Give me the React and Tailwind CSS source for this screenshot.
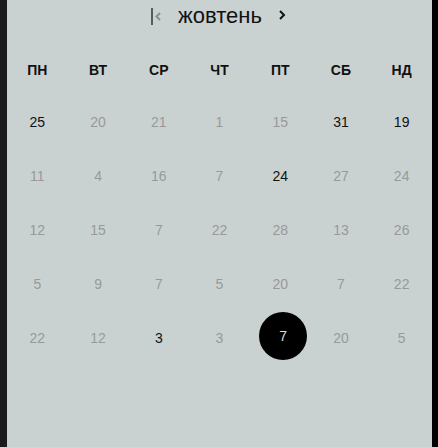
const weekdays = ['ПН', 'ВТ', 'СР', 'ЧТ', 'ПТ', 'СБ', 'НД'];

// [value, active]
const rows = [
  [[25, 1], [20], [21], [1], [15], [31, 1], [19, 1]],
  [[11], [4], [16], [7], [24, 1], [27], [24]],
  [[12], [15], [7], [22], [28], [13], [26]],
  [[5], [9], [7], [5], [20], [7], [22]],
  [[22], [12], [3, 1], [3], [7, 2], [20], [5]],
];

export default function App() {
  return (
    <div className="flex h-[447px] w-[438px] overflow-hidden bg-[#c9d2d1] font-['Liberation_Sans',Arial,sans-serif]">
      <div className="w-[7px] bg-[#1b1b1b]" />

      <div className="flex-1">
        {/* Month header */}
        <div className="flex h-[32px] items-center justify-center pr-[2px]">
          <svg width="11" height="20" viewBox="0 0 11 20" className="mr-[16px]">
            <line x1="1" y1="2" x2="1" y2="19" stroke="#333" strokeWidth="1.5" />
            <path d="M9 7 L5.5 10.5 L9 14" fill="none" stroke="#8a8f8f" strokeWidth="2" />
          </svg>
          <span className="text-[22px] leading-none text-[#111]">жовтень</span>
          <svg width="8" height="12" viewBox="0 0 8 12" className="ml-[16px] -mt-[2px]">
            <path d="M2 2 L6 6 L2 10" fill="none" stroke="#111" strokeWidth="2" />
          </svg>
        </div>

        {/* Weekdays */}
        <div className="mt-[13px] grid h-[50px] grid-cols-7 items-center">
          {weekdays.map(d => (
            <div key={d} className="text-center text-[14px] font-bold text-[#111]">{d}</div>
          ))}
        </div>

        {/* Days */}
        {rows.map((row, i) => (
          <div key={i} className="grid h-[54px] grid-cols-7 items-center">
            {row.map(([n, s], j) => (
              <div key={j} className="flex items-center justify-center text-[14px]">
                {s === 2 ? (
                  <span className="-mt-[4px] ml-[6px] flex h-[48px] w-[48px] items-center justify-center rounded-full bg-black text-[#ddd]">
                    {n}
                  </span>
                ) : (
                  <span className={s ? 'text-[#111]' : 'text-[#999]'}>{n}</span>
                )}
              </div>
            ))}
          </div>
        ))}
      </div>

      <div className="w-[6px] bg-black" />
    </div>
  );
}
